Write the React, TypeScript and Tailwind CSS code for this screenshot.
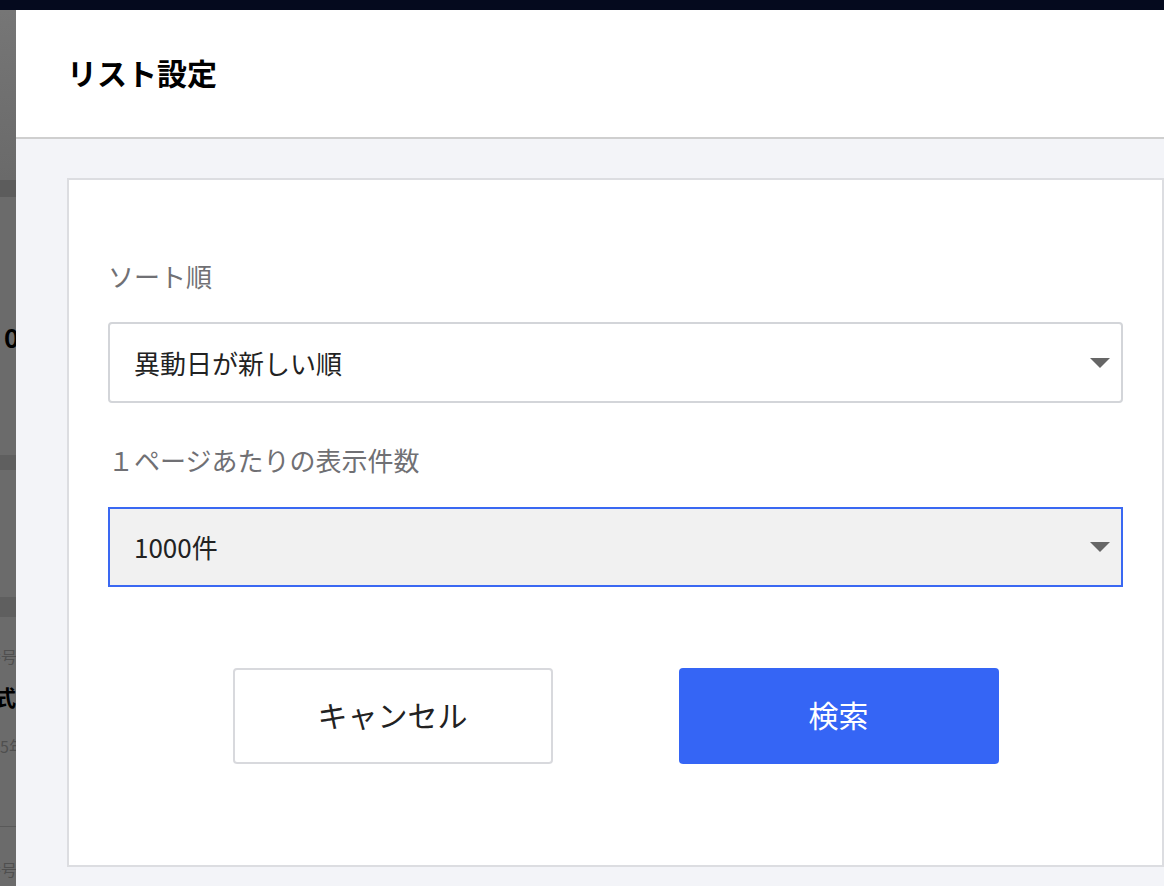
import React from "react";

function Arrow() {
  return (
    <svg width="20" height="10" viewBox="0 0 20 10" className="shrink-0">
      <path d="M0 0 H20 L10 10 Z" fill="#666666" />
    </svg>
  );
}

export default function App() {
  return (
    <div className="relative w-[1164px] h-[886px] overflow-hidden bg-[#6b6b6b] font-['Noto_Sans_CJK_JP','Noto_Sans',sans-serif]">
      {/* dimmed background page */}
      <div className="flex flex-col h-full">
        <div className="h-[10px] shrink-0 bg-[#050a1e]" />
        <div className="h-[170px] shrink-0 bg-gradient-to-b from-[#767676] to-[#6a6a6a]" />
        <div className="h-[17px] shrink-0 bg-[#5c5c5c]" />
        <div className="h-[258px] shrink-0 bg-[#6b6b6b] pt-[125px] pl-[4px]">
          <div className="text-[26px] leading-[30px] font-bold text-black">0</div>
        </div>
        <div className="h-[15px] shrink-0 bg-[#5f5f5f]" />
        <div className="h-[127px] shrink-0 bg-[#6b6b6b]" />
        <div className="h-[20px] shrink-0 bg-[#5f5f5f]" />
        <div className="h-[210px] shrink-0 bg-[#6b6b6b] pt-[29px] border-b border-[#595959]">
          <div className="w-[17px] overflow-hidden flex justify-end whitespace-nowrap text-[16px] leading-[20px] text-[#4f4f4f]">
            証券番号
          </div>
          <div className="mt-[16px] w-[16px] overflow-hidden flex justify-end whitespace-nowrap text-[22px] leading-[28px] font-bold text-black">
            株式
          </div>
          <div className="mt-[26px] w-[25px] overflow-hidden flex justify-end whitespace-nowrap text-[16px] leading-[20px] text-[#4f4f4f]">
            2025年
          </div>
        </div>
        <div className="flex-1 bg-[#6b6b6b] pt-[32px]">
          <div className="w-[17px] overflow-hidden flex justify-end whitespace-nowrap text-[16px] leading-[20px] text-[#4f4f4f]">
            証券番号
          </div>
        </div>
      </div>

      {/* modal */}
      <div className="absolute left-[16px] top-[10px] bottom-0 w-[1199px] flex flex-col bg-[#f3f4f8]">
        <div className="h-[129px] shrink-0 bg-white border-b-2 border-[#cfcfcf] flex items-center pl-[51px] pb-[3px]">
          <h1 className="text-[30px] font-bold text-black leading-none">リスト設定</h1>
        </div>
        <div className="px-[51px] pt-[39px]">
          <div className="bg-white border-2 border-[#dcdde1] px-[39px] pt-[80px] pb-[101px]">
            <div className="text-[26px] leading-[32px] text-[#707074]">ソート順</div>
            <div className="mt-[30px] h-[81px] border-2 border-[#d3d5d9] rounded-[4px] bg-white flex items-center justify-between pl-[24px] pr-[11px]">
              <span className="text-[26px] leading-[32px] text-[#222222]">異動日が新しい順</span>
              <Arrow />
            </div>
            <div className="mt-[41px] text-[26px] leading-[32px] text-[#707074]">１ページあたりの表示件数</div>
            <div className="mt-[31px] h-[80px] border-2 border-[#3a68f2] bg-[#f1f1f1] flex items-center justify-between pl-[24px] pr-[11px]">
              <span className="text-[26px] leading-[32px] text-[#222222]">1000件</span>
              <Arrow />
            </div>
            <div className="mt-[81px] flex justify-center gap-[126px]">
              <button className="w-[320px] h-[96px] border-2 border-[#d8d9dd] rounded-[4px] bg-white text-[30px] text-[#222222] pb-[3px]">
                キャンセル
              </button>
              <button className="w-[320px] h-[96px] rounded-[4px] bg-[#3565f5] text-[30px] text-white pb-[3px]">
                検索
              </button>
            </div>
          </div>
        </div>
      </div>
    </div>
  );
}
